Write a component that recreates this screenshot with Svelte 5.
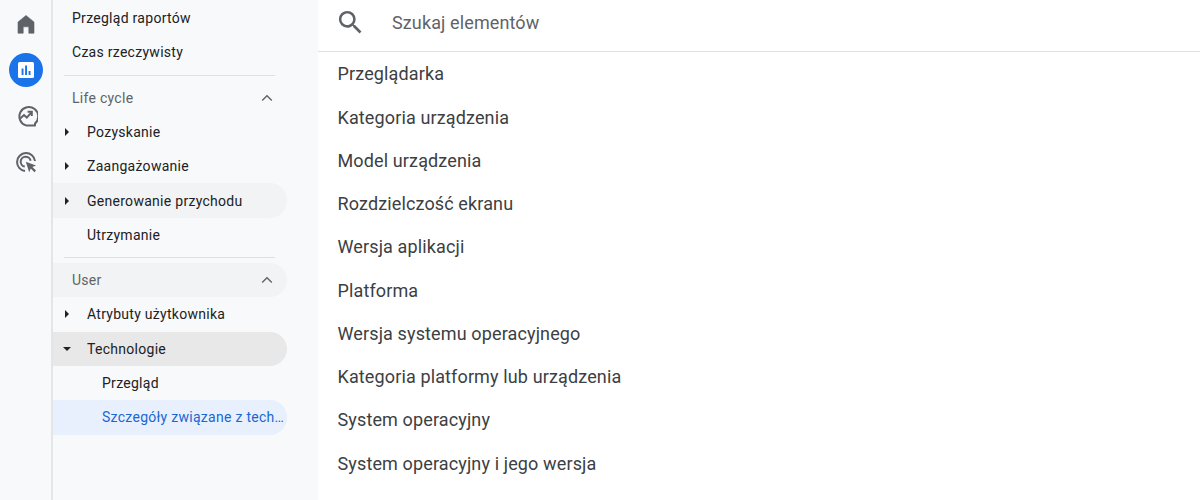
<script lang="ts">
	const results = [
		'Przeglądarka',
		'Kategoria urządzenia',
		'Model urządzenia',
		'Rozdzielczość ekranu',
		'Wersja aplikacji',
		'Platforma',
		'Wersja systemu operacyjnego',
		'Kategoria platformy lub urządzenia',
		'System operacyjny',
		'System operacyjny i jego wersja'
	];
</script>

<div class="page">
	<nav class="rail">
		<div class="rail-btn">
			<svg viewBox="0 0 24 24" width="24" height="24"><path d="M12 3.4 4 10v11.2h5.2v-6.4h5.6v6.4H20V10z" fill="#5f6368" stroke="#5f6368" stroke-width=".6" stroke-linejoin="round" /></svg>
		</div>
		<div class="rail-btn active">
			<svg viewBox="0 0 24 24" width="24" height="24">
				<rect x="4" y="4" width="16" height="16" rx="1.5" fill="#fff" />
				<path d="M7.6 10.5h1.9v6.5H7.6zM11.1 7.5H13V17h-1.9zM14.6 13h1.9v4h-1.9z" fill="#1a73e8" />
			</svg>
		</div>
		<div class="rail-btn">
			<svg viewBox="0 0 24 24" width="24" height="24" fill="none" stroke="#5f6368" stroke-width="2">
				<path d="M21 19.5A9.4 9.4 0 1 0 12 21.4h9z" stroke-linejoin="round" />
				<path d="M6.2 14.6 10 11l2.8 2.6 4.4-5" />
				<path d="M13.6 7.8h4.2V12" />
			</svg>
		</div>
		<div class="rail-btn">
			<svg viewBox="0 0 24 24" width="24" height="24" fill="none" stroke="#5f6368" stroke-width="2">
				<path d="M11 21a9 9 0 1 1 10-10" />
				<path d="M10.8 16.6a5 5 0 1 1 5.8-5.8" />
				<path d="M11.8 11.8 22 15.4l-3.6 1.6 3.6 3.6-1.6 1.6-3.6-3.6-1.6 3.6z" fill="#5f6368" stroke="none" />
			</svg>
		</div>
	</nav>

	<aside class="side">
		<div class="row top">Przegląd raportów</div>
		<div class="row top">Czas rzeczywisty</div>
		<div class="rule"></div>
		<div class="row head">
			<span>Life cycle</span>
			<svg class="chev" viewBox="0 0 12 8" width="12" height="8"><path d="M1.2 6.6 6 1.8l4.8 4.8" fill="none" stroke="#5f6368" stroke-width="1.4" /></svg>
		</div>
		<div class="row item"><i class="caret"></i>Pozyskanie</div>
		<div class="row item"><i class="caret"></i>Zaangażowanie</div>
		<div class="row item hover"><i class="caret"></i>Generowanie przychodu</div>
		<div class="row item">Utrzymanie</div>
		<div class="rule"></div>
		<div class="row head hover">
			<span>User</span>
			<svg class="chev" viewBox="0 0 12 8" width="12" height="8"><path d="M1.2 6.6 6 1.8l4.8 4.8" fill="none" stroke="#5f6368" stroke-width="1.4" /></svg>
		</div>
		<div class="row item"><i class="caret"></i>Atrybuty użytkownika</div>
		<div class="row item open"><i class="caret down"></i>Technologie</div>
		<div class="row sub">Przegląd</div>
		<div class="row sub current">Szczegóły związane z tech…</div>
	</aside>

	<main class="main">
		<div class="search">
			<svg viewBox="0 0 24 24" width="31" height="31"><path d="M15.5 14h-.79l-.28-.27A6.47 6.47 0 0 0 16 9.5 6.5 6.5 0 1 0 9.5 16c1.61 0 3.09-.59 4.23-1.57l.27.28v.79l5 4.99L20.49 19zm-6 0C7.01 14 5 11.99 5 9.5S7.01 5 9.5 5 14 7.01 14 9.5 11.99 14 9.5 14" fill="#5f6368" /></svg>
			<span>Szukaj elementów</span>
		</div>
		<ul class="results">
			{#each results as r}
				<li>{r}</li>
			{/each}
		</ul>
	</main>
</div>

<style>
	:global(body) {
		margin: 0;
		background: #fff;
	}
	.page {
		display: flex;
		width: 1200px;
		height: 500px;
		overflow: hidden;
		font-family: Roboto, 'Liberation Sans', sans-serif;
	}
	.rail {
		flex: none;
		width: 53px;
		box-sizing: border-box;
		padding-top: 7px;
		display: flex;
		flex-direction: column;
		background: #f8f9fa;
		border-right: 2px solid #e4e5e7;
	}
	.rail-btn {
		width: 34px;
		height: 34px;
		margin: 0 0 12px 9px;
		display: flex;
		align-items: center;
		justify-content: center;
		border-radius: 50%;
	}
	.rail-btn.active {
		background: #1a73e8;
	}
	.side {
		flex: none;
		width: 265px;
		box-sizing: border-box;
		padding-top: 1px;
		background: #f8f9fa;
	}
	.row {
		width: 234px;
		height: 34.3px;
		display: flex;
		align-items: center;
		position: relative;
		box-sizing: border-box;
		font-size: 14px;
		letter-spacing: 0.28px;
		color: #202124;
		border-radius: 0 17px 17px 0;
	}
	.top {
		padding-left: 19px;
	}
	.head {
		padding-left: 19px;
		justify-content: space-between;
		padding-right: 14px;
		color: #5f6368;
	}
	.item {
		padding-left: 34px;
	}
	.sub {
		padding-left: 49px;
	}
	.hover {
		background: #f2f3f4;
	}
	.open {
		background: #e8e8e9;
	}
	.current {
		background: #e8f0fe;
		color: #1a67d2;
		white-space: nowrap;
	}
	.rule {
		width: 211px;
		margin: 5.4px 0 4.6px 11px;
		border-top: 1px solid #e0e0e0;
	}
	.caret {
		position: absolute;
		left: 12px;
		top: 50%;
		margin-top: -4px;
		border-left: 4px solid #202124;
		border-top: 4px solid transparent;
		border-bottom: 4px solid transparent;
	}
	.caret.down {
		left: 10px;
		margin-top: -2px;
		border-top: 4px solid #202124;
		border-left: 4px solid transparent;
		border-right: 4px solid transparent;
		border-bottom: 0;
	}
	.main {
		flex: 1;
		min-width: 0;
		background: #fff;
	}
	.search {
		height: 52px;
		box-sizing: border-box;
		display: flex;
		align-items: center;
		padding: 0 0 6px 17px;
		border-bottom: 1px solid #e0e0e0;
		font-size: 18px;
		letter-spacing: 0.12px;
		color: #5f6368;
		gap: 26px;
	}
	.results {
		list-style: none;
		margin: 0;
		padding: 0.2px 0 0 19.5px;
	}
	.results li {
		height: 43.25px;
		display: flex;
		align-items: center;
		font-size: 18px;
		letter-spacing: 0.13px;
		color: #3c4043;
	}
</style>
